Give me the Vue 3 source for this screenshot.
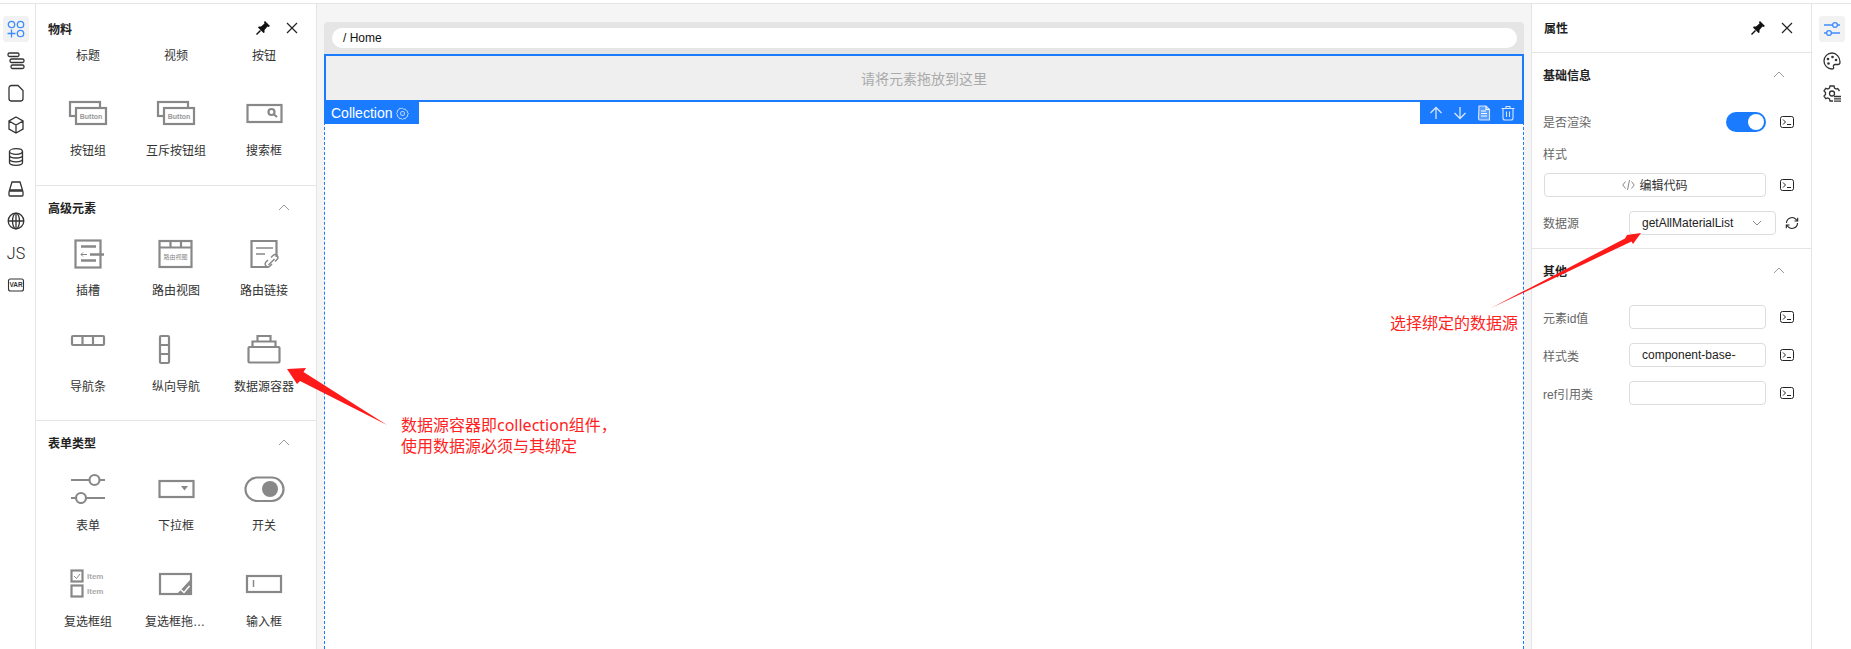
<template>
  <div class="page">
    <div class="topline"></div>
    <div class="main">
      <div class="rail">
        <div class="rail-btn active">
          <svg width="20" height="20" viewBox="0 0 20 20" fill="none" stroke="#3f8cff" stroke-width="1.3">
            <circle cx="5.5" cy="5.5" r="3.2" /><circle cx="14.5" cy="5.5" r="3.2" /><circle cx="14.5" cy="14.5" r="3.2" />
            <path d="M5.5 10.500v8M1.500 14.500h8" />
          </svg>
        </div>
        <div class="rail-btn">
          <svg width="20" height="20" viewBox="0 0 20 20" fill="none" stroke="#333" stroke-width="1.3">
            <rect x="2" y="2" width="11" height="3.5" rx="1.5" /><rect x="4" y="8" width="14" height="3.5" rx="1.5" /><rect x="5" y="14" width="13" height="3.5" rx="1.5" />
          </svg>
        </div>
        <div class="rail-btn">
          <svg width="20" height="20" viewBox="0 0 20 20" fill="none" stroke="#333" stroke-width="1.3">
            <path d="M5.500 2.500H12l5 5v8a2.500 2.500 0 0 1-2.500 2.500h-9A2.500 2.500 0 0 1 3 15.500V5a2.500 2.500 0 0 1 2.500-2.500z" />
          </svg>
        </div>
        <div class="rail-btn">
          <svg width="20" height="20" viewBox="0 0 20 20" fill="none" stroke="#333" stroke-width="1.3">
            <path d="M10 2l7 4v8l-7 4-7-4V6zM3 6l7 4 7-4M10 10v8" />
          </svg>
        </div>
        <div class="rail-btn">
          <svg width="20" height="20" viewBox="0 0 20 20" fill="none" stroke="#333" stroke-width="1.3">
            <ellipse cx="10" cy="4.500" rx="6.500" ry="2.800" />
            <path d="M3.500 4.500v11c0 1.600 3 2.800 6.500 2.800s6.500-1.200 6.500-2.800v-11M3.500 8.200c0 1.600 3 2.800 6.500 2.800s6.500-1.200 6.500-2.800M3.500 12c0 1.600 3 2.800 6.500 2.800s6.500-1.200 6.500-2.800" />
          </svg>
        </div>
        <div class="rail-btn">
          <svg width="20" height="20" viewBox="0 0 20 20" fill="none" stroke="#333" stroke-width="1.3">
            <path d="M6 3h8l2.500 8h-13z" /><rect x="3" y="12" width="14" height="5" rx="1" />
          </svg>
        </div>
        <div class="rail-btn">
          <svg width="20" height="20" viewBox="0 0 20 20" fill="none" stroke="#333" stroke-width="1.3">
            <circle cx="10" cy="10" r="7.800" /><ellipse cx="10" cy="10" rx="3.500" ry="7.800" /><path d="M2.200 10h15.600M10 2.200v15.600" />
          </svg>
        </div>
        <div class="rail-btn"><span class="js">JS</span></div>
        <div class="rail-btn">
          <svg width="20" height="20" viewBox="0 0 20 20" fill="none">
            <rect x="2.500" y="4" width="15" height="12" rx="2" stroke="#333" stroke-width="1.100" />
            <text x="10" y="12.300" text-anchor="middle" font-size="6.500" font-weight="700" fill="#333" font-family="Liberation Sans">VAR</text>
          </svg>
        </div>
      </div>

      <div class="panel left">
        <div class="panel-head short">
          <span class="panel-title">物料</span>
          <div class="head-tools">
            <svg class="pin" width="16" height="16" viewBox="0 0 16 16"><path d="M10 1l5 5-1.500 1-1-.5-3 3.500v2.500l-1 .5L3 7.500l.8-1H6l3.500-3L9 2z" fill="#111" /><path d="M5.500 10.500l-4 4" stroke="#111" stroke-width="1.500" /></svg>
            <svg width="14" height="14" viewBox="0 0 14 14" fill="none" stroke="#222" stroke-width="1.200"><path d="M2 2l10 10M12 2L2 12" /></svg>
          </div>
        </div>

        <div class="section first">
          <div class="cut-row">
            <span v-for="name in cutLabels" :key="name" class="item-label">{{ name }}</span>
          </div>
          <div class="item-grid">
            <div v-for="item in sections[0]" :key="item.name" class="item">
              <svg class="item-icon" width="48" height="32" viewBox="0 0 48 32" fill="none" stroke="#888" stroke-width="2.200">
                <template v-if="item.icon === 'group'">
                  <rect x="6" y="5" width="30" height="14" />
                  <rect x="12" y="11" width="30" height="16" fill="#fff" />
                  <text x="27" y="22" text-anchor="middle" font-size="7" font-weight="700" fill="#999" stroke="none" font-family="Liberation Sans">Button</text>
                </template>
                <template v-else>
                  <rect x="7.500" y="8" width="34" height="17" />
                  <circle cx="31.500" cy="15" r="3" />
                  <path d="M34 17.500l3 2.500" />
                </template>
              </svg>
              <span class="item-label">{{ item.name }}</span>
            </div>
          </div>
        </div>

        <div class="section">
          <div class="section-head">
            <span>高级元素</span>
            <svg class="chev" width="12" height="8" viewBox="0 0 12 8" fill="none" stroke="#999" stroke-width="1"><path d="M1 7l5-5 5 5" /></svg>
          </div>
          <div class="item-grid">
            <div v-for="item in sections[1]" :key="item.name" class="item">
              <svg class="item-icon" width="48" height="32" viewBox="0 0 48 32" fill="none" stroke="#888" stroke-width="2.200">
                <template v-if="item.icon === 'slot'">
                  <rect x="11.500" y="3.500" width="25" height="27" />
                  <path d="M17 9.500h15M17 23.500h15M26 17.500h14" stroke-width="2.500" />
                  <path d="M17 17.500h6M19 15.500l-2 2 2 2" stroke-width="1" />
                </template>
                <template v-else-if="item.icon === 'view'">
                  <rect x="7.500" y="4" width="32" height="26" />
                  <path d="M7.500 10.500h32M18.500 4v6.500M29 4v6.500" />
                  <text x="23.500" y="22" text-anchor="middle" font-size="6" fill="#888" stroke="none" font-family="Noto Sans CJK SC">路由视图</text>
                </template>
                <template v-else-if="item.icon === 'link'">
                  <path d="M36.500 20V4h-25v26h17" />
                  <path d="M16 11h17M16 17h9" stroke-width="1.500" />
                  <path d="M28.500 28l6-6M31 20.500l2-2a2.800 2.800 0 0 1 4 4l-2 2M32 27l-2 2a2.800 2.800 0 0 1-4-4l2-2" stroke-width="1.500" />
                </template>
                <template v-else-if="item.icon === 'nav'">
                  <rect x="8" y="3" width="32" height="9" rx="1" />
                  <path d="M18.500 3v9M29 3v9" />
                </template>
                <template v-else-if="item.icon === 'vnav'">
                  <rect x="8" y="3" width="9" height="27" rx="1" />
                  <path d="M8 12h9M8 21h9" />
                </template>
                <template v-else>
                  <rect x="8.500" y="14" width="31" height="15.500" rx="1" />
                  <path d="M12.500 14V8.500h23V14M17.500 8.500V3h13v5.500" />
                </template>
              </svg>
              <span class="item-label">{{ item.name }}</span>
            </div>
          </div>
        </div>

        <div class="section">
          <div class="section-head">
            <span>表单类型</span>
            <svg class="chev" width="12" height="8" viewBox="0 0 12 8" fill="none" stroke="#999" stroke-width="1"><path d="M1 7l5-5 5 5" /></svg>
          </div>
          <div class="item-grid">
            <div v-for="item in sections[2]" :key="item.name" class="item">
              <svg class="item-icon" width="48" height="32" viewBox="0 0 48 32" fill="none" stroke="#888" stroke-width="2.200">
                <template v-if="item.icon === 'form'">
                  <path d="M7 8h18.500M35.500 8H41M7 26h5M22 26h19" />
                  <circle cx="30.500" cy="8" r="5" />
                  <circle cx="17" cy="26" r="5" />
                </template>
                <template v-else-if="item.icon === 'select'">
                  <rect x="7.500" y="9" width="34" height="16" />
                  <path d="M29 14h7l-3.500 4.500z" fill="#888" stroke="none" />
                </template>
                <template v-else-if="item.icon === 'toggle'">
                  <rect x="5.500" y="5.500" width="38" height="23.500" rx="11.700" />
                  <circle cx="30" cy="17" r="8" fill="#888" stroke="none" />
                </template>
                <template v-else-if="item.icon === 'checks'">
                  <rect x="7.500" y="2.500" width="11" height="11" />
                  <path d="M10 8l2.500 2.500L16 6" stroke-width="1" />
                  <rect x="7.500" y="17.500" width="11" height="11" />
                  <text x="23" y="11" font-size="8" font-weight="700" fill="#aaa" stroke="none" font-family="Liberation Sans">Item</text>
                  <text x="23" y="26" font-size="8" font-weight="700" fill="#aaa" stroke="none" font-family="Liberation Sans">Item</text>
                </template>
                <template v-else-if="item.icon === 'drag'">
                  <rect x="8" y="6" width="31" height="20" />
                  <path d="M39 11v16H24z" fill="#888" stroke="none" />
                  <path d="M28 21l4 3.500 5.500-6.500" stroke="#fff" stroke-width="1.500" />
                </template>
                <template v-else>
                  <rect x="7" y="8" width="34" height="16" />
                  <path d="M13.500 12v7" stroke-width="1.500" />
                </template>
              </svg>
              <span class="item-label">{{ item.name }}</span>
            </div>
          </div>
        </div>
      </div>

      <div class="canvas">
        <div class="crumb-bar">
          <div class="crumb">/&nbsp;Home</div>
        </div>
        <div class="drop-zone">请将元素拖放到这里</div>
        <div class="collection">
          <div class="tag">
            Collection
            <svg width="13" height="13" viewBox="0 0 14 14" fill="none" stroke="#d5e5ff" stroke-width="1"><path d="M7 .8l1.600 1.200 2-.2.800 1.800 1.800.8-.2 2L14.200 7 13 8.600l.2 2-1.800.8-.8 1.800-2-.2L7 14.200 5.400 13l-2 .2-.8-1.800-1.800-.8.2-2L-.2 7 1 5.400l-.2-2 1.800-.8.8-1.800 2 .2z" transform="translate(.7 .7) scale(.9)" /><rect x="5" y="5" width="4" height="4" rx="1" /></svg>
          </div>
          <div class="tools">
            <svg width="14" height="14" viewBox="0 0 14 14" fill="none" stroke="#d5e5ff" stroke-width="1.300"><path d="M7 13V1.500M1.500 7L7 1.500 12.500 7" /></svg>
            <svg width="14" height="14" viewBox="0 0 14 14" fill="none" stroke="#d5e5ff" stroke-width="1.300"><path d="M7 1v11.500M1.500 7L7 12.500 12.500 7" /></svg>
            <svg width="14" height="16" viewBox="0 0 14 16" fill="none" stroke="#d5e5ff" stroke-width="1.100"><path d="M2 1h7l3.500 3.500V15H3a1.500 1.500 0 0 1-1.500-1.500z" fill="#d5e5ff" fill-opacity=".35" /><path d="M4 6h5M4 8.500h6M4 11h6M9 1v3.500h3.500" stroke="#fff" /></svg>
            <svg width="14" height="16" viewBox="0 0 14 16" fill="none" stroke="#d5e5ff" stroke-width="1.100"><path d="M.5 3.500h13M5 3.500V1.500h4v2M2 3.500V13a2 2 0 0 0 2 2h6a2 2 0 0 0 2-2V3.500M5.500 6.500v5.500M8.500 6.500v5.500" /></svg>
          </div>
        </div>
      </div>

      <div class="panel right">
        <div class="panel-head bordered">
          <span class="panel-title">属性</span>
          <div class="head-tools">
            <svg class="pin" width="16" height="16" viewBox="0 0 16 16"><path d="M10 1l5 5-1.500 1-1-.5-3 3.500v2.500l-1 .5L3 7.500l.8-1H6l3.500-3L9 2z" fill="#111" /><path d="M5.500 10.500l-4 4" stroke="#111" stroke-width="1.500" /></svg>
            <svg width="14" height="14" viewBox="0 0 14 14" fill="none" stroke="#222" stroke-width="1.200"><path d="M2 2l10 10M12 2L2 12" /></svg>
          </div>
        </div>

        <div class="prop-section base">
          <div class="prop-head">
            <span>基础信息</span>
            <svg class="chev" width="12" height="8" viewBox="0 0 12 8" fill="none" stroke="#999" stroke-width="1"><path d="M1 7l5-5 5 5" /></svg>
          </div>
          <div class="prop-row render">
            <span class="prop-label">是否渲染</span>
            <div class="switch-wrap"><div class="switch"><div class="knob"></div></div></div>
            <svg class="term" width="14" height="12" viewBox="0 0 14 12" fill="none" stroke="#222" stroke-width="1"><rect x=".5" y=".5" width="13" height="11" rx="2" /><path d="M3 3.500L5.500 6 3 8.500M7 8.500h4" /></svg>
          </div>
          <div class="style-label prop-label">样式</div>
          <div class="prop-row code">
            <div class="code-btn">
              <svg width="13" height="12" viewBox="0 0 13 12" fill="none" stroke="#888" stroke-width="1"><path d="M3.500 2.500L.8 6l2.700 3.500M9.500 2.500L12.200 6 9.500 9.500M7.500 1L5.500 11" /></svg>
              <span class="btn-text">编辑代码</span>
            </div>
            <svg class="term" width="14" height="12" viewBox="0 0 14 12" fill="none" stroke="#222" stroke-width="1"><rect x=".5" y=".5" width="13" height="11" rx="2" /><path d="M3 3.500L5.500 6 3 8.500M7 8.500h4" /></svg>
          </div>
          <div class="prop-row source">
            <span class="prop-label">数据源</span>
            <div class="select">
              <span>getAllMaterialList</span>
              <svg width="10" height="6" viewBox="0 0 10 6" fill="none" stroke="#888" stroke-width="1"><path d="M1 1l4 4 4-4" /></svg>
            </div>
            <svg class="refresh" width="14" height="14" viewBox="0 0 14 14" fill="none" stroke="#222" stroke-width="1.100"><path d="M1.500 7a5.500 5.500 0 0 1 9.500-3.700L12.500 5M12.500 7A5.500 5.500 0 0 1 3 10.700L1.500 9" /><path d="M12.700 1.800V5H9.500M1.300 12.200V9h3.200" /></svg>
          </div>
        </div>

        <div class="prop-section">
          <div class="prop-head other">
            <span>其他</span>
            <svg class="chev" width="12" height="8" viewBox="0 0 12 8" fill="none" stroke="#999" stroke-width="1"><path d="M1 7l5-5 5 5" /></svg>
          </div>
          <div v-for="field in fields" :key="field.label" class="prop-row field">
            <span class="prop-label">{{ field.label }}</span>
            <div class="input"><span class="input-text">{{ field.value }}</span></div>
            <svg class="term" width="14" height="12" viewBox="0 0 14 12" fill="none" stroke="#222" stroke-width="1"><rect x=".5" y=".5" width="13" height="11" rx="2" /><path d="M3 3.500L5.500 6 3 8.500M7 8.500h4" /></svg>
          </div>
        </div>
      </div>

      <div class="rail rail-right">
        <div class="rail-btn active">
          <svg width="20" height="20" viewBox="0 0 20 20" fill="none" stroke="#3f8cff" stroke-width="1.300">
            <path d="M2 6h9M15.500 6H18M2 14h3M9.500 14H18" /><circle cx="13" cy="6" r="2.400" /><circle cx="7" cy="14" r="2.400" />
          </svg>
        </div>
        <div class="rail-btn">
          <svg width="20" height="20" viewBox="0 0 20 20" fill="none" stroke="#333" stroke-width="1.300">
            <path d="M10 2a8 8 0 1 0 0 16c1.500 0 2-1 1.500-2-.6-1.300.2-2.500 1.700-2.500H16c1.300 0 2-1 2-2.500 0-5-3.800-9-8-9z" />
            <circle cx="6" cy="8" r="1.300" fill="#333" stroke="none" /><circle cx="10.500" cy="6" r="1.300" fill="#333" stroke="none" /><circle cx="14" cy="9" r="1.300" fill="#333" stroke="none" /><circle cx="6.500" cy="12.500" r="1.300" fill="#333" stroke="none" />
          </svg>
        </div>
        <div class="rail-btn">
          <svg width="20" height="20" viewBox="0 0 20 20" fill="none" stroke="#333" stroke-width="1.300">
            <path d="M11 18H8l-.5-2-1.700-1-2 .7L2 13l1.500-1.500v-2L2 8l1.800-2.700 2 .7 1.700-1L8 3h4l.5 2 1.700 1 1.500-.5L17.500 8" />
            <circle cx="10" cy="10.500" r="2.500" />
            <path d="M12 13.500h7M12 15.800h7M12 18.200h7" />
          </svg>
        </div>
      </div>
    </div>

    <svg class="arrows" width="1851" height="649" viewBox="0 0 1851 649">
      <path d="M387 425L300 381l-3 3-10-15 19-1-2.500 4z" fill="#ff1a1a" />
      <path d="M1491 308L1625 238.500l2-3.500 14-2-8 11-1.500-2.500z" fill="#ff1a1a" />
    </svg>
    <div class="note note-left">数据源容器即collection组件，<br />使用数据源必须与其绑定</div>
    <div class="note note-right">选择绑定的数据源</div>
  </div>
</template>

<script setup>
const cutLabels = ["标题", "视频", "按钮"];

const sections = [
  [
    { name: "按钮组", icon: "group" },
    { name: "互斥按钮组", icon: "group" },
    { name: "搜索框", icon: "search" },
  ],
  [
    { name: "插槽", icon: "slot" },
    { name: "路由视图", icon: "view" },
    { name: "路由链接", icon: "link" },
    { name: "导航条", icon: "nav" },
    { name: "纵向导航", icon: "vnav" },
    { name: "数据源容器", icon: "collection" },
  ],
  [
    { name: "表单", icon: "form" },
    { name: "下拉框", icon: "select" },
    { name: "开关", icon: "toggle" },
    { name: "复选框组", icon: "checks" },
    { name: "复选框拖拽组", icon: "drag" },
    { name: "输入框", icon: "input" },
  ],
];

const fields = [
  { label: "元素id值", value: "" },
  { label: "样式类", value: "component-base-collection" },
  { label: "ref引用类", value: "" },
];
</script>

<style>
html,
body {
  margin: 0;
  overflow: hidden;
  background: #fff;
}
</style>

<style scoped>
.page {
  position: relative;
  width: 1851px;
  height: 649px;
  overflow: hidden;
  font-family: "Liberation Sans", "Noto Sans CJK SC", sans-serif;
  font-size: 12px;
  color: #222;
  background: #fff;
}

.topline {
  height: 3px;
  border-bottom: 1px solid #e5e5e5;
}

.main {
  display: flex;
  height: 645px;
}

.rail {
  flex: none;
  width: 26px;
  padding: 12px 6px 0 3px;
  border-right: 1px solid #e5e5e5;
  display: flex;
  flex-direction: column;
  gap: 6px;
}

.rail-btn {
  width: 26px;
  height: 26px;
  border-radius: 3px;
  display: flex;
  align-items: center;
  justify-content: center;
}

.rail-btn.active {
  background: #f2f2f2;
}

.rail-right {
  border-right: none;
  padding: 12px 6px 0 7px;
}

.js {
  font-family: "Roboto", sans-serif;
  font-weight: 300;
  font-size: 16px;
  color: #222;
}

.panel {
  width: 281px;
  flex: none;
  box-sizing: border-box;
  border-right: 1px solid #e5e5e5;
  background: #fff;
  overflow: hidden;
}

.panel.right {
  border-left: 1px solid #e5e5e5;
}

.panel-head {
  height: 48px;
  display: flex;
  align-items: center;
  justify-content: space-between;
  padding: 0 17px 0 12px;
  box-sizing: border-box;
}

.panel-head.short {
  height: 44px;
  padding-top: 4px;
}

.panel-head.bordered {
  height: 49px;
  padding-bottom: 1px;
  border-bottom: 1px solid #e5e5e5;
}

.panel-title {
  font-weight: 700;
}

.head-tools {
  display: flex;
  align-items: center;
  gap: 14px;
}

.section {
  border-bottom: 1px solid #e5e5e5;
}

.section.first {
  padding-bottom: 1px;
}

.cut-row {
  height: 40px;
  overflow: hidden;
  display: grid;
  grid-template-columns: repeat(3, 88px);
  padding-left: 8px;
  justify-items: center;
}

.section-head {
  height: 42px;
  padding: 0 26px 0 12px;
  box-sizing: border-box;
  display: flex;
  align-items: center;
  justify-content: space-between;
  font-weight: 700;
}

.item-grid {
  display: grid;
  grid-template-columns: repeat(3, 88px);
  grid-auto-rows: 96px;
  padding-left: 8px;
}

.item {
  display: flex;
  flex-direction: column;
  align-items: center;
}

.item-icon {
  display: block;
  margin-top: 9px;
}

.item > .item-label {
  margin-top: 14px;
}

.item-label {
  display: block;
  max-width: 62px;
  line-height: 16px;
  white-space: nowrap;
  overflow: hidden;
  text-overflow: ellipsis;
  color: #333;
}

.canvas {
  flex: 1;
  min-width: 0;
  background: #f5f5f5;
  padding: 18px 7px 0;
  display: flex;
  flex-direction: column;
}

.crumb-bar {
  height: 32px;
  box-sizing: border-box;
  background: #e5e5e5;
  border-radius: 4px 4px 0 0;
  padding: 6px 7px 6px 8px;
}

.crumb {
  height: 20px;
  line-height: 20px;
  border-radius: 10px;
  background: #fff;
  padding-left: 11px;
  color: #111;
}

.drop-zone {
  height: 48px;
  box-sizing: border-box;
  border: 2px solid #1a7bff;
  background: #efefef;
  color: #aaa;
  font-size: 14px;
  display: flex;
  align-items: center;
  justify-content: center;
}

.collection {
  position: relative;
  flex: 1;
  background: #fff;
  border-left: 1px dashed #1a7bff;
  border-right: 1px dashed #1a7bff;
}

.tag {
  position: absolute;
  left: -1px;
  top: 0;
  width: 95px;
  height: 22px;
  box-sizing: border-box;
  padding-left: 7px;
  background: #1a7bff;
  color: #fff;
  font-size: 14px;
  display: flex;
  align-items: center;
  gap: 4px;
}

.tools {
  position: absolute;
  right: -1px;
  top: 0;
  width: 104px;
  height: 22px;
  box-sizing: border-box;
  padding: 0 9px;
  background: #1a7bff;
  display: flex;
  align-items: center;
  justify-content: space-between;
}

.prop-section.base {
  border-bottom: 1px solid #e5e5e5;
  height: 196px;
  box-sizing: border-box;
}

.prop-head {
  height: 44px;
  box-sizing: border-box;
  padding: 0 26px 2px 11px;
  display: flex;
  align-items: center;
  justify-content: space-between;
  font-weight: 700;
}

.prop-head.other {
  height: 42px;
  margin-bottom: 1px;
  padding-bottom: 0;
}

.prop-row {
  display: flex;
  align-items: center;
  padding-left: 11px;
}

.prop-label {
  color: #666;
  flex: none;
  width: 86px;
}

.render .prop-label,
.source .prop-label {
  padding-bottom: 2px;
}

.render {
  height: 24px;
  margin-top: 13px;
}

.switch-wrap {
  width: 137px;
  display: flex;
  justify-content: flex-end;
}

.switch {
  width: 40px;
  height: 20px;
  border-radius: 10px;
  background: #1a7bff;
  position: relative;
}

.knob {
  position: absolute;
  right: 2px;
  top: 2px;
  width: 16px;
  height: 16px;
  border-radius: 50%;
  background: #fff;
}

.term {
  flex: none;
  margin-left: 14px;
}

.style-label {
  margin-top: 11px;
  margin-left: 11px;
  line-height: 20px;
}

.code {
  margin-top: 8px;
  padding-left: 12px;
}

.code-btn {
  width: 222px;
  height: 24px;
  box-sizing: border-box;
  border: 1px solid #ddd;
  border-radius: 4px;
  display: flex;
  align-items: center;
  justify-content: center;
  gap: 4px;
  color: #333;
}

.btn-text {
  padding-bottom: 2px;
}

.source {
  margin-top: 14px;
}

.select {
  width: 147px;
  height: 24px;
  box-sizing: border-box;
  border: 1px solid #ddd;
  border-radius: 4px;
  padding: 0 13px 0 12px;
  display: flex;
  align-items: center;
  justify-content: space-between;
  color: #222;
}

.refresh {
  flex: none;
  margin-left: 9px;
}

.field {
  margin-top: 14px;
}

.input {
  width: 137px;
  height: 24px;
  box-sizing: border-box;
  border: 1px solid #ddd;
  border-radius: 4px;
  padding-left: 12px;
  line-height: 22px;
  color: #222;
}

.input-text {
  display: block;
  width: 94px;
  height: 22px;
  overflow: hidden;
  white-space: nowrap;
}

.arrows {
  position: absolute;
  left: 0;
  top: 0;
  pointer-events: none;
}

.note {
  position: absolute;
  font-size: 16px;
  line-height: 21px;
  color: #ff2222;
  white-space: nowrap;
}

.note-left {
  left: 401px;
  top: 415px;
  font-family: "Noto Sans", "Noto Sans CJK SC", sans-serif;
}

.note-right {
  left: 1390px;
  top: 313px;
}
</style>
